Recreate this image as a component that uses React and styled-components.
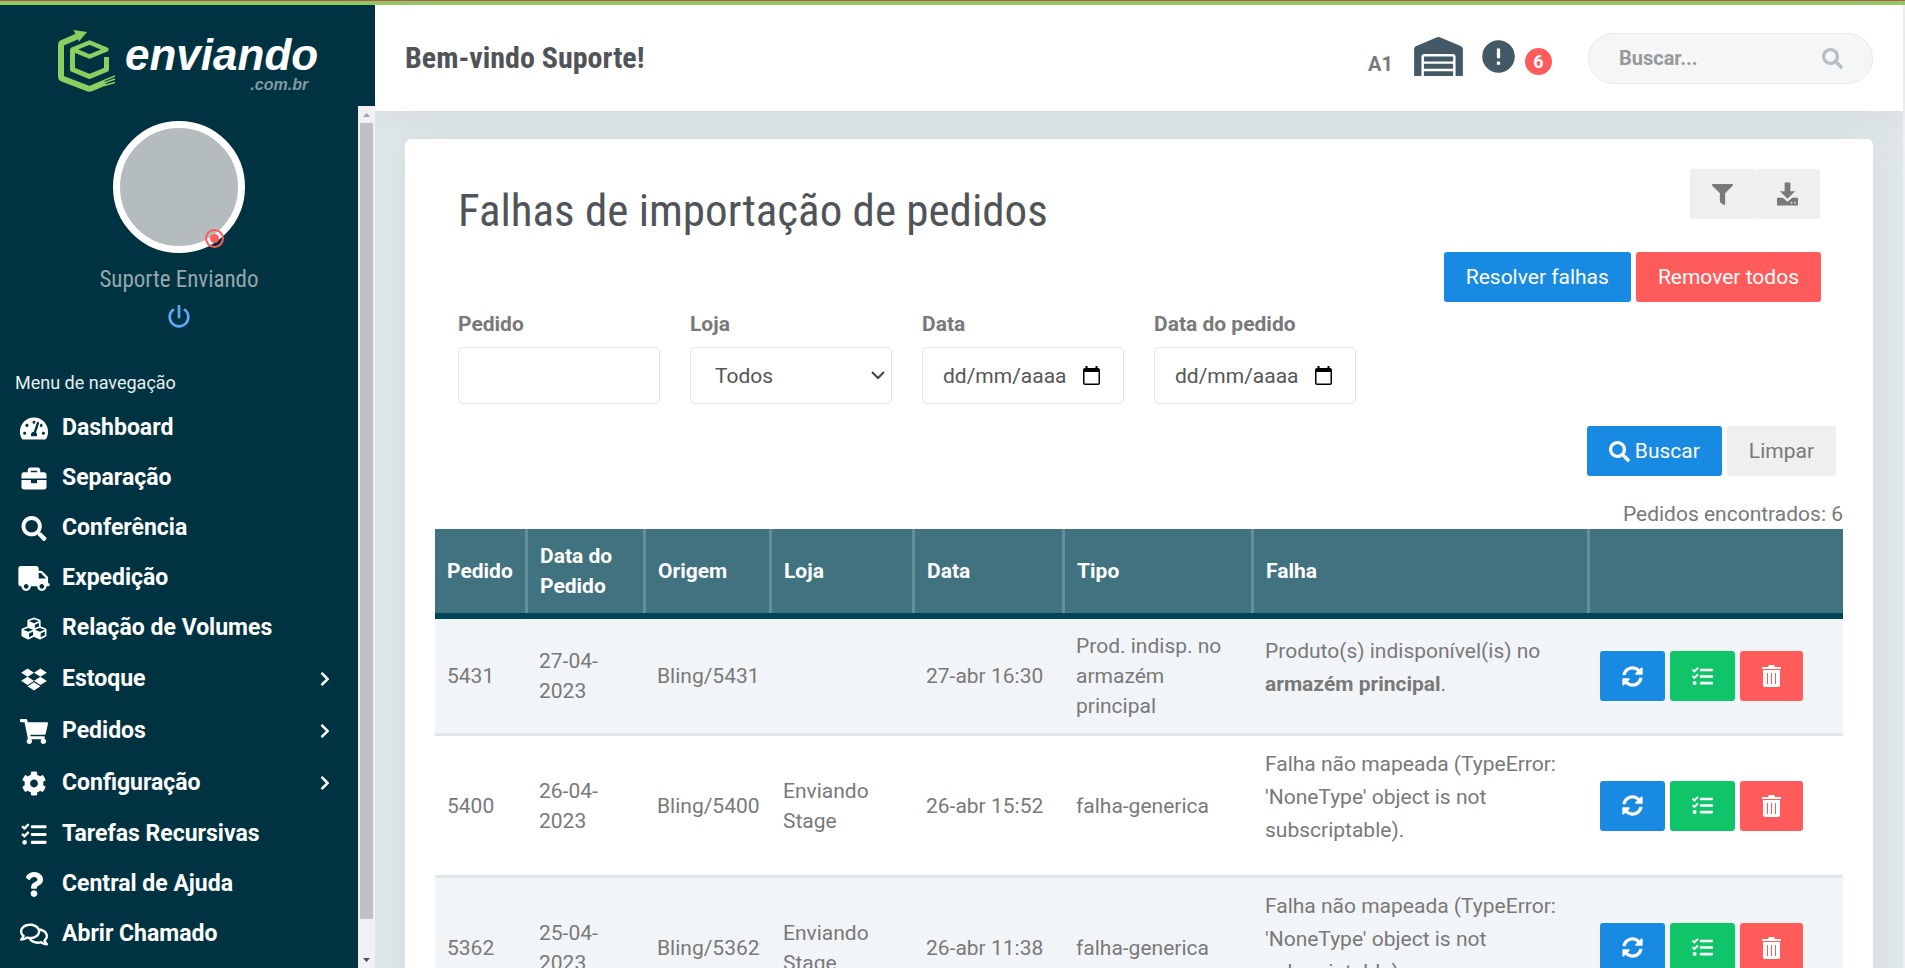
import styled, { createGlobalStyle } from "styled-components"
import {
  FaBriefcase, FaChevronRight, FaCog, FaCubes, FaDropbox, FaFilter, FaQuestion, FaRegComments,
  FaSearch, FaShoppingCart, FaSyncAlt, FaTachometerAlt, FaTasks, FaTruck, FaWarehouse,
} from "react-icons/fa"

const MENU = [
  { name: "Dashboard", Icon: FaTachometerAlt },
  { name: "Separação", Icon: FaBriefcase },
  { name: "Conferência", Icon: FaSearch },
  { name: "Expedição", Icon: FaTruck },
  { name: "Relação de Volumes", Icon: FaCubes },
  { name: "Estoque", Icon: FaDropbox, hasSubmenu: true },
  { name: "Pedidos", Icon: FaShoppingCart, hasSubmenu: true },
  { name: "Configuração", Icon: FaCog, hasSubmenu: true },
  { name: "Tarefas Recursivas", Icon: FaTasks },
  { name: "Central de Ajuda", Icon: FaQuestion },
  { name: "Abrir Chamado", Icon: FaRegComments },
]

const COLUMNS = [
  { name: "Pedido", width: 93 },
  { name: "Data do Pedido", width: 118 },
  { name: "Origem", width: 126 },
  { name: "Loja", width: 143 },
  { name: "Data", width: 150 },
  { name: "Tipo", width: 189 },
  { name: "Falha", width: 336 },
  { name: "", width: 253 },
]

const genericFailure = "Falha não mapeada (TypeError: 'NoneType' object is not subscriptable)."

const ORDERS = [
  {
    id: "5431", orderDate: "27-04-2023", origin: "Bling/5431", store: "", date: "27-abr 16:30",
    type: "Prod. indisp. no armazém principal",
    failure: <>Produto(s) indisponível(is) no <b>armazém principal</b>.</>,
  },
  {
    id: "5400", orderDate: "26-04-2023", origin: "Bling/5400", store: "Enviando Stage", date: "26-abr 15:52",
    type: "falha-generica", failure: genericFailure,
  },
  {
    id: "5362", orderDate: "25-04-2023", origin: "Bling/5362", store: "Enviando Stage", date: "26-abr 11:38",
    type: "falha-generica", failure: genericFailure,
  },
]

const LogoIcon = () => (
  <svg width="58" height="62" viewBox="0 0 58 62" fill="none" stroke="#8ccf5f" strokeWidth="6" strokeLinejoin="round">
    <path d="M20 6.500 L5 13 Q4 13.500 4 15 V46 Q4 48 5 48.500 L31 58.500 Q32.500 59 34 58.500 L48 52.500" />
    <path d="M16.500 0 L30 2 L22 11.500 Z" fill="#8ccf5f" stroke="none" />
    <path d="M15.500 19.500 V39.500 L32.500 46.500 L49.500 39.500 V27" strokeWidth="5" />
    <path d="M15.500 19.500 L32.500 12.500 L49.500 19.500 L32.500 26.500 Z" strokeWidth="4.500" />
    <path d="M47 50.500 L58 46 M47 53 L58 49 M47 55.500 L58 52.500" strokeWidth="1.400" />
  </svg>
)

const PowerIcon = () => (
  <svg width="32" height="32" viewBox="0 0 24 24" fill="#5fa8f5">
    <path d="M16.560 5.440l-1.450 1.450A5.969 5.969 0 0 1 18 12a6 6 0 0 1-6 6 6 6 0 0 1-6-6c0-2.170 1.160-4.060 2.880-5.120L7.440 5.440A7.961 7.961 0 0 0 4 12a8 8 0 0 0 8 8 8 8 0 0 0 8-8c0-2.720-1.360-5.120-3.440-6.560M13 3h-2v10h2" />
  </svg>
)

const AlertIcon = () => (
  <svg width="39" height="39" viewBox="0 0 24 24" fill="#435966">
    <path d="M13 13h-2V7h2m0 10h-2v-2h2M12 2A10 10 0 0 0 2 12a10 10 0 0 0 10 10 10 10 0 0 0 10-10A10 10 0 0 0 12 2z" />
  </svg>
)

const DownloadIcon = () => (
  <svg width="21" height="24" viewBox="0 0 22 24" fill="currentColor">
    <path d="M8 0h6v9h5l-8 8-8-8h5z" />
    <path fillRule="evenodd" d="M0 16h6l5 4 5-4h6v8H0zM14.500 20.500v1.500h1.500v-1.500zM18 20.500v1.500h1.500v-1.500z" />
  </svg>
)

const TrashIcon = () => (
  <svg width="19" height="22" viewBox="0 0 19 22" fill="currentColor">
    <path d="M0 2h6l1-2h5l1 2h6v2H0z" />
    <path fillRule="evenodd" d="M1 5h17v15a2 2 0 0 1-2 2H3a2 2 0 0 1-2-2zM5 8v11h1V8zM9 8v11h1V8zM13 8v11h1V8z" />
  </svg>
)

const CalendarIcon = () => (
  <svg width="17" height="19" viewBox="0 0 17 19" fill="#000">
    <path fillRule="evenodd" d="M2.500 0h2v2h8V0h2v2H15a2 2 0 0 1 2 2v13a2 2 0 0 1-2 2H2a2 2 0 0 1-2-2V4a2 2 0 0 1 2-2h.5zM1.500 6v11.500h14V6z" />
  </svg>
)

const SelectArrow = () => (
  <svg width="14" height="9" viewBox="0 0 14 9" fill="none" stroke="#454545" strokeWidth="2">
    <path d="M1 1l6 6 6-6" />
  </svg>
)

const ScrollArrow = ({ down }) => (
  <svg width="17" height="17" viewBox="0 0 17 17" fill={down ? "#505050" : "#a3a3a3"}>
    <path d={down ? "M5 7h7L8.500 11z" : "M5 11h7L8.500 7z"} />
  </svg>
)

const Sidebar = () => (
  <Side>
    <Logo href="#">
      <LogoIcon />
      <LogoName>
        <strong>enviando</strong>
        <span>.com.br</span>
      </LogoName>
    </Logo>
    <SideBody>
      <SideContent>
        <Avatar><Status /></Avatar>
        <UserName>Suporte Enviando</UserName>
        <PowerButton aria-label="Sair"><PowerIcon /></PowerButton>
        <MenuTitle>Menu de navegação</MenuTitle>
        <nav>
          {MENU.map(({ name, Icon, hasSubmenu }) => (
            <MenuLink href="#" key={name} $tall={hasSubmenu}>
              <MenuIcon><Icon /></MenuIcon>
              <span>{name}</span>
              {hasSubmenu && <FaChevronRight className="arrow" />}
            </MenuLink>
          ))}
        </nav>
      </SideContent>
      <ScrollTrack>
        <ScrollArrow />
        <ScrollThumb />
        <ScrollArrow down />
      </ScrollTrack>
    </SideBody>
  </Side>
)

const Header = () => (
  <TopBar>
    <Welcome>Bem-vindo Suporte!</Welcome>
    <TopActions>
      <WarehouseCode>A1</WarehouseCode>
      <TopIcons>
        <FaWarehouse className="warehouse" />
        <AlertIcon />
      </TopIcons>
      <Badge>6</Badge>
      <SearchBox>
        <input type="search" placeholder="Buscar..." aria-label="Buscar" />
        <button aria-label="Pesquisar"><FaSearch /></button>
      </SearchBox>
    </TopActions>
  </TopBar>
)

const Filters = () => (
  <FilterRow>
    <Field>
      <label htmlFor="pedido">Pedido</label>
      <FieldBox><input id="pedido" type="text" /></FieldBox>
    </Field>
    <Field>
      <label htmlFor="loja">Loja</label>
      <FieldBox $select>
        <select id="loja"><option>Todos</option></select>
        <SelectArrow />
      </FieldBox>
    </Field>
    <Field>
      <label htmlFor="data">Data</label>
      <FieldBox>
        <input id="data" type="text" placeholder="dd/mm/aaaa" />
        <CalendarIcon />
      </FieldBox>
    </Field>
    <Field>
      <label htmlFor="data-pedido">Data do pedido</label>
      <FieldBox>
        <input id="data-pedido" type="text" placeholder="dd/mm/aaaa" />
        <CalendarIcon />
      </FieldBox>
    </Field>
  </FilterRow>
)

const OrdersTable = () => (
  <Table>
    <colgroup>
      {COLUMNS.map(({ name, width }) => <Col key={name} $width={width} />)}
    </colgroup>
    <thead>
      <tr>{COLUMNS.map(({ name }) => <th key={name}>{name}</th>)}</tr>
    </thead>
    <tbody>
      {ORDERS.map((order) => (
        <tr key={order.id}>
          <td>{order.id}</td>
          <td>{order.orderDate}</td>
          <td>{order.origin}</td>
          <td>{order.store}</td>
          <td>{order.date}</td>
          <td>{order.type}</td>
          <td><Failure>{order.failure}</Failure></td>
          <td>
            <RowActions>
              <Button $color="blue" aria-label="Reprocessar"><FaSyncAlt /></Button>
              <Button $color="green" aria-label="Resolver"><FaTasks /></Button>
              <Button $color="red" aria-label="Remover"><TrashIcon /></Button>
            </RowActions>
          </td>
        </tr>
      ))}
    </tbody>
  </Table>
)

const App = () => {
  return (
    <>
      <GlobalStyle />
      <Page>
        <LoadingBar />
        <Layout>
          <Sidebar />
          <Main>
            <Header />
            <Content>
              <Card>
                <CardHead>
                  <h1>Falhas de importação de pedidos</h1>
                  <ButtonGroup>
                    <Button aria-label="Filtrar"><FaFilter /></Button>
                    <Button aria-label="Baixar"><DownloadIcon /></Button>
                  </ButtonGroup>
                </CardHead>
                <BulkActions>
                  <Button $color="blue">Resolver falhas</Button>
                  <Button $color="red">Remover todos</Button>
                </BulkActions>
                <Filters />
                <FilterActions>
                  <Button $color="blue"><FaSearch /> Buscar</Button>
                  <Button>Limpar</Button>
                </FilterActions>
                <Total>Pedidos encontrados: 6</Total>
                <OrdersTable />
              </Card>
            </Content>
          </Main>
        </Layout>
      </Page>
    </>
  )
}

const colors = {
  blue: "#188ae2",
  green: "#10c469",
  red: "#ff5b5b",
}

const GlobalStyle = createGlobalStyle`
  * {
    box-sizing: border-box;
  }

  body {
    margin: 0;
    background: #dfe7ea;
    color: #797979;
    font-family: Roboto, sans-serif;
    font-size: 21px;
    line-height: 30px;
    overflow: hidden;
  }

  button, input, select {
    font: inherit;
    color: inherit;
  }

  a {
    color: inherit;
    text-decoration: none;
  }

  svg {
    display: block;
    flex: none;
  }
`

const Page = styled.div`
  display: flex;
  flex-direction: column;
  height: 100vh;
  overflow: hidden;
`

const LoadingBar = styled.div`
  flex: none;
  height: 5px;
  background: #8ccc5f;
  border-top: 1px solid #c0504d;
`

const Layout = styled.div`
  display: flex;
  flex: 1;
  min-height: 0;
  border-right: 2px solid #f1f1f1;
`

const Side = styled.aside`
  position: relative;
  z-index: 1;
  display: flex;
  flex-direction: column;
  flex: none;
  width: 375px;
  background: #003342;
`

const Logo = styled.a`
  display: flex;
  gap: 10px;
  flex: none;
  height: 101px;
  padding: 25px 0 0 57px;
`

const LogoName = styled.span`
  display: flex;
  flex-direction: column;
  padding-top: 3px;
  font-family: "Liberation Sans", sans-serif;
  font-style: italic;
  font-weight: 700;
  color: #fff;

  strong {
    font-size: 44px;
    line-height: 44px;
  }

  span {
    align-self: flex-end;
    padding-right: 10px;
    font-size: 16px;
    line-height: 16px;
    color: #809aa1;
  }
`

const SideBody = styled.div`
  display: flex;
  flex: 1;
  min-height: 0;
`

const SideContent = styled.div`
  display: flex;
  flex-direction: column;
  align-items: center;
  flex: 1;
  overflow: hidden;
  padding-top: 15px;

  nav {
    align-self: stretch;
  }
`

const Avatar = styled.div`
  position: relative;
  flex: none;
  width: 132px;
  height: 132px;
  border: 7px solid #fff;
  border-radius: 50%;
  background: #b4bcbe;
`

const Status = styled.span`
  position: absolute;
  right: 14px;
  bottom: -2px;
  width: 19px;
  height: 19px;
  padding: 3px;
  border: 2px solid ${colors.red};
  border-radius: 50%;
  background: ${colors.red} content-box;
`

const UserName = styled.h5`
  margin: 13px 0 7px;
  font-family: "Roboto Condensed", Roboto, sans-serif;
  font-weight: 400;
  font-size: 23px;
  line-height: 28px;
  color: #98a6ad;
`

const PowerButton = styled.button`
  padding: 0;
  border: 0;
  background: none;
`

const MenuTitle = styled.div`
  align-self: stretch;
  padding: 35px 15px 5px;
  font-size: 18px;
  line-height: 30px;
  color: #e8eef0;
`

const MenuLink = styled.a`
  display: flex;
  align-items: center;
  height: ${({ $tall }) => ($tall ? 52 : 50)}px;
  padding: 0 28px 0 15px;
  gap: 9px;
  font-weight: 700;
  font-size: 23px;
  color: #fff;

  .arrow {
    margin-left: auto;
    width: 10px;
    height: 16px;
  }
`

const MenuIcon = styled.span`
  width: 38px;

  svg {
    width: 100%;
    height: 25px;
  }
`

const ScrollTrack = styled.div`
  display: flex;
  flex-direction: column;
  width: 17px;
  background: #f1f1f1;
`

const ScrollThumb = styled.div`
  flex: 1;
  margin: 0 2px 32px;
  background: #c1c1c1;
`

const Main = styled.div`
  display: flex;
  flex-direction: column;
  flex: 1;
  min-width: 0;
`

const TopBar = styled.header`
  display: flex;
  align-items: center;
  justify-content: space-between;
  flex: none;
  height: 106px;
  padding: 0 30px;
  background: #fff;
  box-shadow: 0 0 35px rgba(154, 161, 171, 0.2);
`

const Welcome = styled.h4`
  margin: 0;
  font-family: "Roboto Condensed", Roboto, sans-serif;
  font-weight: 700;
  font-size: 30px;
  color: #505458;
`

const TopActions = styled.div`
  display: flex;
  align-items: center;
`

const TopIcons = styled.div`
  display: flex;
  align-items: center;
  gap: 16px;
  margin: 0 7px 3px 21px;
  color: #435966;

  .warehouse {
    width: 49px;
    height: 39px;
  }
`

const WarehouseCode = styled.span`
  padding-top: 12px;
  font-weight: 700;
  font-size: 20px;
`

const Badge = styled.span`
  width: 27px;
  height: 27px;
  margin: 6px 36px 0 0;
  border-radius: 50%;
  background: ${colors.red};
  color: #fff;
  font-weight: 700;
  font-size: 18px;
  line-height: 27px;
  text-align: center;
`

const SearchBox = styled.div`
  display: flex;
  align-items: center;
  width: 285px;
  height: 51px;
  padding: 0 29px 0 30px;
  border: 1px solid #e5e9eb;
  border-radius: 26px;
  background: #f4f6f8;

  input {
    flex: 1;
    min-width: 0;
    padding: 0;
    border: 0;
    outline: 0;
    background: none;
    font-weight: 700;
    font-size: 20px;
  }

  input::placeholder {
    color: #98999a;
  }

  button {
    padding: 0;
    border: 0;
    background: none;
    color: #b5c0c5;
  }
`

const Content = styled.main`
  flex: 1;
  min-height: 0;
  padding: 28px 30px 0;
`

const Card = styled.section`
  padding: 30px;
  border-radius: 6px;
  background: #fff;
  box-shadow: 0 0 35px rgba(154, 161, 171, 0.15);
`

const CardHead = styled.div`
  display: flex;
  justify-content: space-between;
  padding: 0 23px;

  h1 {
    margin: 15px 0 0;
    font-family: "Roboto Condensed", Roboto, sans-serif;
    font-weight: 400;
    font-size: 45px;
    line-height: 54px;
    color: #505458;
  }
`

const ButtonGroup = styled.div`
  display: flex;
  height: 50px;
`

const BulkActions = styled.div`
  display: flex;
  justify-content: flex-end;
  gap: 5px;
  margin-top: 14px;
  padding-right: 22px;
`

const Button = styled.button`
  display: flex;
  align-items: center;
  justify-content: center;
  gap: 5px;
  height: 50px;
  padding: 0 22px;
  border: 0;
  border-radius: 3px;
  background: ${({ $color }) => colors[$color] || "#efefef"};
  color: ${({ $color }) => ($color ? "#fff" : "#797979")};
  cursor: pointer;
`

const FilterRow = styled.div`
  display: flex;
  flex-wrap: wrap;
  gap: 30px;
  margin-top: 7px;
  padding: 0 23px;
`

const Field = styled.div`
  display: flex;
  flex-direction: column;
  gap: 8px;
  width: 202px;

  label {
    font-weight: 700;
  }
`

const FieldBox = styled.div`
  display: flex;
  align-items: center;
  height: 57px;
  padding: ${({ $select }) => ($select ? "0 6px 0 24px" : "0 23px 0 20px")};
  border: 1px solid #e3e3e3;
  border-radius: 5px;
  color: #565656;

  input, select {
    flex: 1;
    min-width: 0;
    padding: 0;
    border: 0;
    outline: 0;
    background: none;
    appearance: none;
  }

  input::placeholder {
    color: #565656;
  }
`

const FilterActions = styled.div`
  display: flex;
  justify-content: flex-end;
  gap: 5px;
  margin: 22px 7px 23px;
`

const Total = styled.div`
  text-align: right;
`

const Table = styled.table`
  width: 100%;
  table-layout: fixed;
  border-spacing: 0;

  th {
    height: 90px;
    padding: 12px;
    background: #407280;
    border-bottom: 6px solid #004558;
    box-shadow: inset -3px 0 #658d99;
    color: #fff;
    font-weight: 700;
    text-align: left;
  }

  th:last-child {
    box-shadow: none;
  }

  td {
    padding: 12px 11px;
    border-bottom: 3px solid #dfe7ea;
  }

  td:first-child {
    padding-left: 12px;
  }

  td:last-child {
    padding-left: 10px;
  }

  tbody tr:nth-child(odd) {
    background: #f2f5f7;
  }
`

const Col = styled.col`
  width: ${({ $width }) => $width}px;
`

const Failure = styled.p`
  margin: 0 0 16px;
  line-height: 33px;
`

const RowActions = styled.div`
  display: flex;
  gap: 5px;
`

export default App
